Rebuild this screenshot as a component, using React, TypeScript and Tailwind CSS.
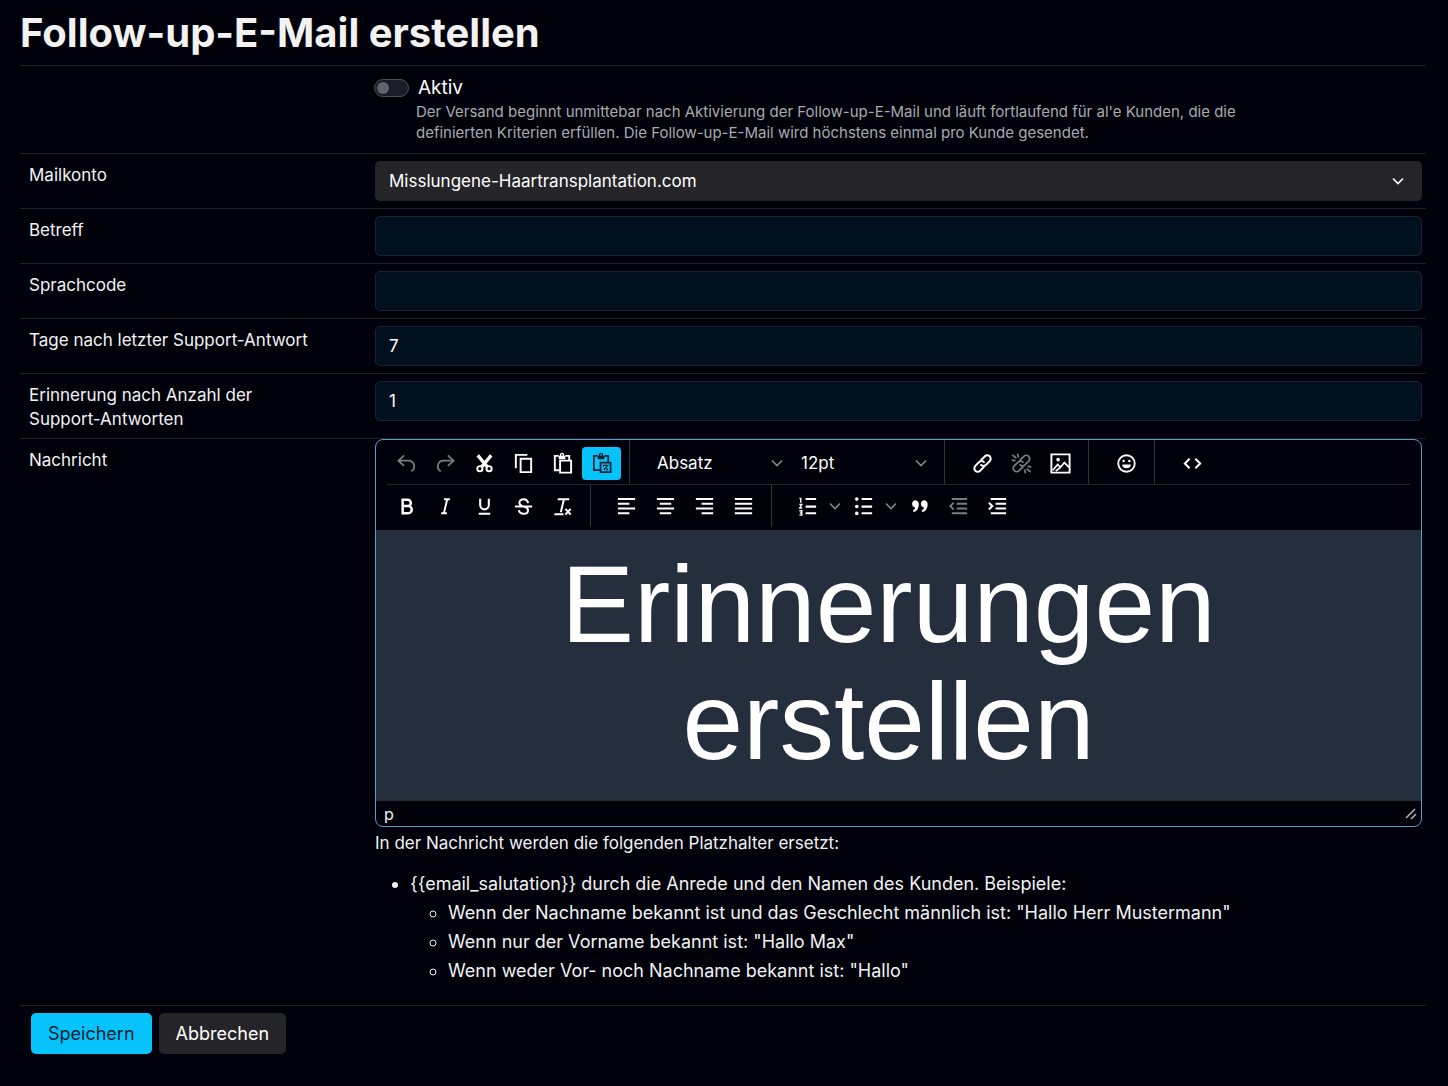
import { useState } from "react";
import type { ReactNode } from "react";

const icons = {
  undo: (
    <path
      d="M9.5 3.5 3.5 9l6 5.5M3.5 9H14a6 6 0 0 1 3 11.2"
      fill="none"
      stroke="currentColor"
      strokeWidth="1.8"
    />
  ),
  redo: (
    <path
      d="m14.5 3.5 6 5.5-6 5.5M20.5 9H10a6 6 0 0 0-3 11.2"
      fill="none"
      stroke="currentColor"
      strokeWidth="1.8"
    />
  ),
  cut: (
    <g fill="none" stroke="currentColor">
      <path d="m5 3.5 10 12M19 3.5 9 15.500" strokeWidth="3.4" />
      <circle cx="7.2" cy="17.4" r="2.7" strokeWidth="2" />
      <circle cx="16.8" cy="17.4" r="2.7" strokeWidth="2" />
    </g>
  ),
  copy: <path d="M16 2H3v15h2V4h11V2Zm5 4v16H8V6h13Zm-2 14V8h-9v12h9Z" />,
  paste: (
    <>
      <path
        d="M8 4H4v15h5M15 4h4v4M9.5 9H21v12.5H9.500Z"
        fill="none"
        stroke="currentColor"
        strokeWidth="2"
      />
      <path d="M8 4h7v3.5H8Z" />
      <circle cx="11.5" cy="3" r="1.6" fill="none" stroke="currentColor" strokeWidth="1.4" />
    </>
  ),
  pasteText: (
    <>
      <path
        d="M8 4H4v15h6M15 4h4v6M11 11h10.5v10H11Z"
        fill="none"
        stroke="currentColor"
        strokeWidth="1.8"
      />
      <path d="M8 4h7v3.5H8Z" />
      <circle cx="11.5" cy="3" r="1.6" fill="none" stroke="currentColor" strokeWidth="1.4" />
      <path
        d="M14 15.5V14h4.5l-4 4.5M16.5 18.5H18V17"
        fill="none"
        stroke="currentColor"
        strokeWidth="1.3"
      />
    </>
  ),
  bold: (
    <path
      d="M8 5h5.2a3.2 3.2 0 0 1 0 6.6H8Zm0 6.6h5.800a3.600 3.600 0 0 1 0 7.400H8Z"
      fill="none"
      stroke="currentColor"
      strokeWidth="2.6"
    />
  ),
  italic: (
    <path
      d="M10.5 4.500h6M7.500 19h6M13.700 5l-3.400 14"
      fill="none"
      stroke="currentColor"
      strokeWidth="2"
    />
  ),
  underline: (
    <path
      d="M7.500 4v6.500a4.500 4.500 0 0 0 9 0V4M6 19.500h12"
      fill="none"
      stroke="currentColor"
      strokeWidth="2.2"
    />
  ),
  strike: (
    <path
      d="M16.800 8.500C16.300 6 14.500 4.500 12.200 4.500c-2.700 0-4.500 1.500-4.500 3.700 0 2 1.500 3 4.300 3.800 3.200.8 4.700 1.700 4.700 3.800 0 2.200-1.900 3.700-4.600 3.700-2.600 0-4.500-1.300-4.900-3.800M3 12h18"
      fill="none"
      stroke="currentColor"
      strokeWidth="2.1"
    />
  ),
  clear: (
    <path
      d="M7 4.500h12M13.500 4.500 10.200 18M3.500 20H13M15 14.500l5.500 6M20.500 14.500l-5.500 6"
      fill="none"
      stroke="currentColor"
      strokeWidth="2.1"
    />
  ),
  link: (
    <g fill="none" stroke="currentColor" strokeWidth="2.1" strokeLinecap="round">
      <path d="m10.500 8.500 4-4a3.400 3.400 0 0 1 5 5l-4 4a3.400 3.400 0 0 1-5 0" />
      <path d="m13.500 15.500-4 4a3.400 3.400 0 0 1-5-5l4-4a3.400 3.400 0 0 1 5 0" />
    </g>
  ),
  unlink: (
    <g fill="none" stroke="currentColor" strokeWidth="1.8" strokeLinecap="round">
      <path d="m10.500 8.500 4-4a3.400 3.400 0 0 1 5 5l-4 4a3.400 3.400 0 0 1-5 0" />
      <path d="m13.500 15.500-4 4a3.400 3.400 0 0 1-5-5l4-4a3.400 3.400 0 0 1 5 0" />
      <path d="M3 3.500 6 6M8 2.500l.5 2.500M2.500 8.500 5 9M21 20.500 18 18M16 21.500l-.5-2.500M21.500 15.500 19 15" />
    </g>
  ),
  image: (
    <g fill="none" stroke="currentColor" strokeWidth="2">
      <path d="M2.500 2.500h19v19h-19Z" />
      <path d="m4 19 5-6 3 3 4-5 5 5M7 20l5-4" strokeWidth="1.8" />
      <circle cx="9.5" cy="8" r="1.9" fill="currentColor" stroke="none" />
    </g>
  ),
  emoji: (
    <>
      <circle cx="12" cy="12" r="8.6" fill="none" stroke="currentColor" strokeWidth="1.9" />
      <circle cx="9" cy="9.500" r="1.3" />
      <circle cx="15" cy="9.500" r="1.3" />
      <path d="M7.500 13h9a4.500 4 0 0 1-9 0Z" />
    </>
  ),
  code: (
    <path
      d="M9 7 4 12l5 5M15 7l5 5-5 5"
      fill="none"
      stroke="currentColor"
      strokeWidth="2.1"
    />
  ),
  alignLeft: <path d="M3 3h18v2.200H3zM3 8h12v2.200H3zM3 13h18v2.200H3zM3 18h12v2.200H3z" />,
  alignCenter: <path d="M3 3h18v2.200H3zM6 8h12v2.200H6zM3 13h18v2.200H3zM6 18h12v2.200H6z" />,
  alignRight: <path d="M3 3h18v2.200H3zM9 8h12v2.200H9zM3 13h18v2.200H3zM9 18h12v2.200H9z" />,
  justify: <path d="M3 3h18v2.200H3zM3 8h18v2.200H3zM3 13h18v2.200H3zM3 18h18v2.200H3z" />,
  numbered: (
    <>
      <path d="M10 3h11v2.200H10zM10 11h11v2.200H10zM10 18h11v2.200H10z" />
      <path
        d="M3.500 3.500H5V8M3.500 10H6l-2 3.500h2.500M3.500 16.500H6V21H3.500M4 18.700h2"
        fill="none"
        stroke="currentColor"
        strokeWidth="1.5"
      />
    </>
  ),
  bullets: (
    <>
      <path d="M10 3h11v2.200H10zM10 11h11v2.200H10zM10 18h11v2.200H10z" />
      <circle cx="5" cy="4.3" r="1.9" />
      <circle cx="5" cy="12" r="1.9" />
      <circle cx="5" cy="19.2" r="1.9" />
    </>
  ),
  quote: (
    <>
      <path d="M7.500 5.500A3.800 3.800 0 0 1 11.300 9.500c0 4.500-2 7.500-5.300 8.500l-1-2c1.500-.6 2.300-1.600 2.500-3a3.800 3.800 0 0 1 0-7.500Z" />
      <path d="M16.700 5.500A3.800 3.800 0 0 1 20.500 9.500c0 4.500-2 7.500-5.300 8.500l-1-2c1.500-.6 2.300-1.600 2.500-3a3.800 3.800 0 0 1 0-7.500Z" />
    </>
  ),
  outdent: (
    <>
      <path d="M5 3h16v2.200H5zM10 8h11v2.200H10zM10 13h11v2.200H10zM5 18h16v2.200H5z" />
      <path d="M7 8 3.500 11.600 7 15.200" fill="none" stroke="currentColor" strokeWidth="2" />
    </>
  ),
  indent: (
    <>
      <path d="M5 3h16v2.200H5zM10 8h11v2.200H10zM10 13h11v2.200H10zM5 18h16v2.200H5z" />
      <path d="m3 8 3.500 3.600L3 15.200" fill="none" stroke="currentColor" strokeWidth="2.2" />
    </>
  ),
};

type IconName = keyof typeof icons;

function ToolButton({
  icon,
  label,
  active,
  disabled,
}: {
  icon: IconName;
  label: string;
  active?: boolean;
  disabled?: boolean;
}) {
  return (
    <button
      type="button"
      aria-label={label}
      aria-pressed={active}
      disabled={disabled}
      className={`flex h-[33px] w-[39px] items-center justify-center rounded ${
        active ? "bg-[#06c3fc] text-[#03202f]" : "text-white disabled:text-[#7c7d82]"
      }`}
    >
      <svg viewBox="0 0 24 24" className="size-[23px]" fill="currentColor" aria-hidden="true">
        {icons[icon]}
      </svg>
    </button>
  );
}

function Chevron({ className }: { className: string }) {
  return (
    <svg viewBox="0 0 12 8" className={className} fill="none" stroke="currentColor" aria-hidden="true">
      <path d="m1 1.500 5 5 5-5" strokeWidth="1.6" />
    </svg>
  );
}

function ListButton({ icon, label }: { icon: IconName; label: string }) {
  return (
    <div className="flex w-14">
      <ToolButton icon={icon} label={label} />
      <button
        type="button"
        aria-label={`${label} Optionen`}
        className="flex w-4 items-center justify-center text-[#85868b]"
      >
        <Chevron className="h-2 w-3" />
      </button>
    </div>
  );
}

function ToolSelect({ label, options }: { label: string; options: string[] }) {
  return (
    <div className="relative w-36">
      <select
        aria-label={label}
        className="h-[33px] w-full appearance-none bg-transparent pl-[9px] text-[17px] text-white outline-none"
      >
        {options.map((option) => (
          <option key={option} className="bg-[#242428]">
            {option}
          </option>
        ))}
      </select>
      <Chevron className="pointer-events-none absolute top-3 right-[9px] h-2 w-3 text-[#85868b]" />
    </div>
  );
}

function ToolGroup({
  children,
  className = "border-r pt-0.5 pl-[18px]",
}: {
  children: ReactNode;
  className?: string;
}) {
  return <div className={`flex items-center border-[#33343b] pr-2 ${className}`}>{children}</div>;
}

function Row({ label, htmlFor, children }: { label: string; htmlFor: string; children: ReactNode }) {
  return (
    <div className="grid grid-cols-[355px_1fr] border-t border-[#1f2028] pr-1">
      <label htmlFor={htmlFor} className="max-w-[300px] pt-[9px] pb-[7px] pl-[9px] text-[17px]">
        {label}
      </label>
      <div>{children}</div>
    </div>
  );
}

const fieldClass =
  "my-[7px] block h-10 w-full rounded-[5px] border border-[#1a2430] bg-[#01101e] px-[13px] text-[17px] text-white outline-none";

export default function App() {
  const [active, setActive] = useState(false);
  const [subject, setSubject] = useState("");
  const [language, setLanguage] = useState("");
  const [days, setDays] = useState("7");
  const [replies, setReplies] = useState("1");

  return (
    <div className="min-h-screen bg-[#00010b] pr-[22px] pl-5 font-['Inter',sans-serif] text-[18px] leading-6 text-[#f2f2f3]">
      <form onSubmit={(e) => e.preventDefault()}>
        <h1 className="pt-2 pb-[7px] text-[40px] leading-[50px] font-bold">
          Follow-up-E-Mail erstellen
        </h1>

        {/* Active switch */}
        <div className="grid grid-cols-[354px_1fr] border-t border-[#1f2028] py-[10px]">
          <div className="col-start-2">
            <div className="mb-px flex items-center gap-[9px]">
              <input
                id="active"
                type="checkbox"
                role="switch"
                checked={active}
                onChange={(e) => setActive(e.target.checked)}
                className="flex h-[18px] w-[35px] appearance-none items-center rounded-full border border-[#4b4d54] bg-[#1b1e28] px-0.5 before:size-3 before:rounded-full before:bg-[#636469] checked:justify-end"
              />
              <label htmlFor="active" className="text-[19px] text-white">
                Aktiv
              </label>
            </div>
            <p className="max-w-[870px] pl-[42px] text-[15px] leading-[21px] text-[#a9aaae]">
              Der Versand beginnt unmittebar nach Aktivierung der Follow-up-E-Mail und läuft
              fortlaufend für al'e Kunden, die die definierten Kriterien erfüllen. Die
              Follow-up-E-Mail wird höchstens einmal pro Kunde gesendet.
            </p>
          </div>
        </div>

        <Row label="Mailkonto" htmlFor="account">
          <div className="relative">
            <select
              id="account"
              className="my-[7px] block h-10 w-full appearance-none rounded-[5px] bg-[#252429] px-[14px] text-[17px] text-white outline-none"
            >
              <option>Misslungene-Haartransplantation.com</option>
            </select>
            <Chevron className="pointer-events-none absolute top-4 right-[18px] h-2 w-3 text-white" />
          </div>
        </Row>
        <Row label="Betreff" htmlFor="subject">
          <input
            id="subject"
            className={fieldClass}
            value={subject}
            onChange={(e) => setSubject(e.target.value)}
          />
        </Row>
        <Row label="Sprachcode" htmlFor="language">
          <input
            id="language"
            className={fieldClass}
            value={language}
            onChange={(e) => setLanguage(e.target.value)}
          />
        </Row>
        <Row label="Tage nach letzter Support-Antwort" htmlFor="days">
          <input
            id="days"
            className={fieldClass}
            value={days}
            onChange={(e) => setDays(e.target.value)}
          />
        </Row>
        <Row label="Erinnerung nach Anzahl der Support-Antworten" htmlFor="replies">
          <input
            id="replies"
            className={fieldClass}
            value={replies}
            onChange={(e) => setReplies(e.target.value)}
          />
        </Row>

        {/* Message editor */}
        <Row label="Nachricht" htmlFor="message">
          <div className="overflow-hidden rounded-lg border border-[#5a9dc0]">
            <div className="px-[11px]">
              <div className="flex h-[45px] border-b border-[#25262d]">
                <ToolGroup className="border-r pt-0.5">
                  <ToolButton icon="undo" label="Rückgängig" disabled />
                  <ToolButton icon="redo" label="Wiederholen" disabled />
                  <ToolButton icon="cut" label="Ausschneiden" />
                  <ToolButton icon="copy" label="Kopieren" />
                  <ToolButton icon="paste" label="Einfügen" />
                  <ToolButton icon="pasteText" label="Als Text einfügen" active />
                </ToolGroup>
                <ToolGroup>
                  <ToolSelect label="Absatzformat" options={["Absatz", "Überschrift 1"]} />
                  <ToolSelect label="Schriftgröße" options={["12pt", "14pt", "18pt"]} />
                </ToolGroup>
                <ToolGroup>
                  <ToolButton icon="link" label="Link einfügen" />
                  <ToolButton icon="unlink" label="Link entfernen" disabled />
                  <ToolButton icon="image" label="Bild einfügen" />
                </ToolGroup>
                <ToolGroup>
                  <ToolButton icon="emoji" label="Emojis" />
                </ToolGroup>
                <ToolGroup className="pt-0.5 pl-[18px]">
                  <ToolButton icon="code" label="Quellcode" />
                </ToolGroup>
              </div>
              <div className="mb-[3px] flex h-[42px]">
                <ToolGroup className="border-r">
                  <ToolButton icon="bold" label="Fett" />
                  <ToolButton icon="italic" label="Kursiv" />
                  <ToolButton icon="underline" label="Unterstrichen" />
                  <ToolButton icon="strike" label="Durchgestrichen" />
                  <ToolButton icon="clear" label="Formatierung entfernen" />
                </ToolGroup>
                <ToolGroup className="border-r pl-4">
                  <ToolButton icon="alignLeft" label="Linksbündig" />
                  <ToolButton icon="alignCenter" label="Zentriert" />
                  <ToolButton icon="alignRight" label="Rechtsbündig" />
                  <ToolButton icon="justify" label="Blocksatz" />
                </ToolGroup>
                <ToolGroup className="pl-4">
                  <ListButton icon="numbered" label="Nummerierte Liste" />
                  <ListButton icon="bullets" label="Aufzählung" />
                  <ToolButton icon="quote" label="Zitat" />
                  <ToolButton icon="outdent" label="Einzug verkleinern" disabled />
                  <ToolButton icon="indent" label="Einzug vergrößern" />
                </ToolGroup>
              </div>
            </div>
            <div
              id="message"
              role="textbox"
              aria-label="Nachricht"
              contentEditable
              suppressContentEditableWarning
              className="min-h-[270px] bg-[#242e3d] pt-4 pr-5 pb-5 text-center font-['Liberation_Sans',sans-serif] text-[109px] leading-[117px] text-white outline-none"
            >
              Erinnerungen
              <br />
              erstellen
            </div>
            <div className="flex h-[26px] items-center justify-between border-t border-[#2b2e38] pr-1 pl-2 text-[16px]">
              <span>p</span>
              <svg viewBox="0 0 12 12" className="size-3" fill="none" stroke="#b5b6ba" aria-hidden="true">
                <path d="m1 10 9-9M6 11l5-5" strokeWidth="1.5" />
              </svg>
            </div>
          </div>

          <p className="mt-1 text-[17px]">In der Nachricht werden die folgenden Platzhalter ersetzt:</p>
          <ul className="mt-[14px] mb-5 list-disc pl-[35px] leading-[29px]">
            <li>
              {"{{email_salutation}} durch die Anrede und den Namen des Kunden. Beispiele:"}
              <ul className="list-[circle] pl-[38px]">
                <li>Wenn der Nachname bekannt ist und das Geschlecht männlich ist: "Hallo Herr Mustermann"</li>
                <li>Wenn nur der Vorname bekannt ist: "Hallo Max"</li>
                <li>Wenn weder Vor- noch Nachname bekannt ist: "Hallo"</li>
              </ul>
            </li>
          </ul>
        </Row>

        <div className="flex gap-[7px] border-t border-[#1f2028] px-[11px] pt-[7px] pb-8">
          <button type="submit" className="h-[41px] rounded-[5px] bg-[#06c3fc] px-[17px] text-[#03202f]">
            Speichern
          </button>
          <button type="button" className="h-[41px] rounded-[5px] bg-[#252429] px-[17px] text-white">
            Abbrechen
          </button>
        </div>
      </form>
    </div>
  );
}
